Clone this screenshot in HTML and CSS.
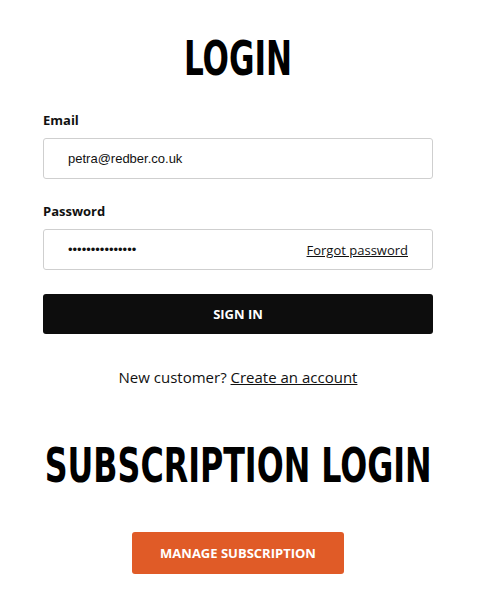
FILE: index.html
```html
<!DOCTYPE html>
<html lang="en">
<head>
    <meta charset="UTF-8">
    <meta name="viewport" content="width=device-width, initial-scale=1.0">
    <title>Login</title>
    <link rel="stylesheet" href="styles.css">
</head>
<body>
    <div class="page">
        <h1 class="title"><span class="title-text">LOGIN</span></h1>

        <form class="login-form" onsubmit="return false">
            <label class="field-label" for="email">Email</label>
            <div class="field">
                <input type="email" id="email" value="petra@redber.co.uk">
            </div>

            <label class="field-label" for="password">Password</label>
            <div class="field">
                <input type="password" id="password" value="redberpassword1">
                <a href="#" class="forgot">Forgot password</a>
            </div>

            <button type="submit" class="btn btn-dark">Sign in</button>
        </form>

        <p class="register">New customer? <a href="#">Create an account</a></p>

        <h1 class="title title-sub"><span class="title-text">SUBSCRIPTION LOGIN</span></h1>

        <div class="manage">
            <button class="btn btn-orange">Manage subscription</button>
        </div>
    </div>
</body>
</html>
```

FILE: styles.css
```css
body {
    margin: 0;
    background: #fff;
    color: #111;
    font-family: 'Open Sans', sans-serif;
}
.page {
    width: 390px;
    margin-left: 43px;
    padding-top: 32px;
}
.title {
    display: flex;
    justify-content: center;
    margin: 0;
    font-family: 'Liberation Sans Narrow', 'DejaVu Sans Condensed', sans-serif;
    font-weight: bold;
    font-size: 48px;
    line-height: 52px;
    color: #000;
    white-space: nowrap;
}
.title-text {
    flex-shrink: 0;
    transform: scaleX(0.72);
}
.title-sub .title-text {
    transform: scaleX(0.735);
}
.login-form {
    margin-top: 27px;
}
.field-label {
    display: block;
    font-size: 13px;
    font-weight: 700;
    line-height: 18px;
    color: #111;
    margin-bottom: 9px;
}
.field {
    display: flex;
    align-items: center;
    height: 41px;
    box-sizing: border-box;
    border: 1px solid #cfcfcf;
    border-radius: 3px;
    padding: 0 24px;
    margin-bottom: 23px;
}
.field:last-of-type {
    margin-bottom: 24px;
}
.field input {
    flex: 1;
    border: none;
    outline: none;
    padding: 0;
    font-family: 'Liberation Sans', Arial, sans-serif;
    font-size: 13px;
    color: #111;
    background: transparent;
}
.forgot {
    font-size: 13px;
    color: #111;
    text-decoration: underline;
}
.btn {
    border: none;
    border-radius: 3px;
    font-family: 'Open Sans', sans-serif;
    font-size: 13px;
    font-weight: 700;
    text-transform: uppercase;
    color: #fff;
    cursor: pointer;
}
.btn-dark {
    display: block;
    width: 100%;
    height: 40px;
    background: #0d0d0d;
}
.register {
    margin: 32px 0 0;
    text-align: center;
    font-size: 15px;
    line-height: 22px;
}
.register a {
    color: #111;
}
.title-sub {
    margin-top: 51px;
}
.manage {
    margin-top: 41px;
    text-align: center;
}
.btn-orange {
    height: 42px;
    padding: 0 28px;
    background: #e05b27;
}
```
